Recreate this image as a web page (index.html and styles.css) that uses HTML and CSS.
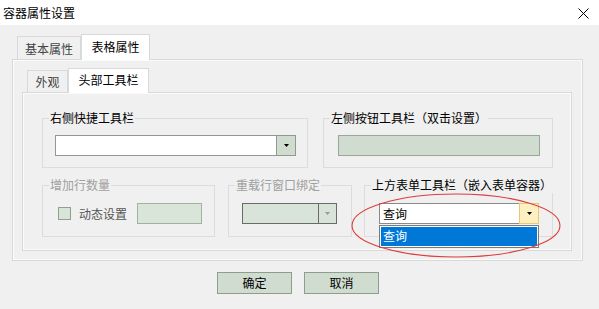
FILE: index.html
```html
<!DOCTYPE html>
<html lang="zh-CN">
<head>
<meta charset="utf-8">
<title>容器属性设置</title>
<link rel="stylesheet" href="styles.css">
</head>
<body>
<div class="window">
  <div class="titlebar">
    <span class="title">容器属性设置</span>
    <svg class="close" width="11" height="11" viewBox="0 0 11 11"><path d="M0.5 0.5 L10.5 10.5 M10.5 0.5 L0.5 10.5" stroke="#000" stroke-width="1"/></svg>
  </div>
  <div class="content">
    <div class="tabs outer-tabs">
      <div class="tab tab-basic">基本属性</div>
      <div class="tab tab-grid active">表格属性</div>
    </div>
    <div class="panel outer-panel">
      <div class="tabs inner-tabs">
        <div class="tab tab-look">外观</div>
        <div class="tab tab-head active">头部工具栏</div>
      </div>
      <div class="panel inner-panel">
        <div class="row row1">
          <fieldset class="group g1">
            <legend>右侧快捷工具栏</legend>
            <div class="combo combo-g1">
              <div class="combo-text"></div>
              <div class="combo-btn"><svg width="5" height="3" viewBox="0 0 5 3"><polygon points="0,0 5,0 2.5,3" fill="#000"/></svg></div>
            </div>
          </fieldset>
          <fieldset class="group g2">
            <legend>左侧按钮工具栏（双击设置）</legend>
            <div class="toolbar-box"></div>
          </fieldset>
        </div>
        <div class="row row2">
          <fieldset class="group g3 disabled">
            <legend>增加行数量</legend>
            <div class="check-row">
              <span class="checkbox"></span>
              <span class="check-label">动态设置</span>
              <span class="num-box"></span>
            </div>
          </fieldset>
          <fieldset class="group g4 disabled">
            <legend>重载行窗口绑定</legend>
            <div class="combo combo-disabled">
              <div class="combo-text"></div>
              <div class="combo-btn"><svg width="5" height="3" viewBox="0 0 5 3"><polygon points="0,0 5,0 2.5,3" fill="#9a9a9a"/></svg></div>
            </div>
          </fieldset>
          <fieldset class="group g5">
            <legend>上方表单工具栏（嵌入表单容器）</legend>
            <div class="combo combo-open">
              <div class="combo-text">查询</div>
              <div class="combo-btn"><svg width="5" height="3" viewBox="0 0 5 3"><polygon points="0,0 5,0 2.5,3" fill="#000"/></svg></div>
              <div class="dropdown"><div class="option selected">查询</div></div>
            </div>
          </fieldset>
        </div>
      </div>
    </div>
    <div class="buttons">
      <button class="btn">确定</button>
      <button class="btn">取消</button>
    </div>
  </div>
  <svg class="highlight" width="599" height="309" viewBox="0 0 599 309"><ellipse cx="456" cy="225.5" rx="104" ry="31.5" fill="none" stroke="#dc3c3c" stroke-width="1.1"/></svg>
</div>
</body>
</html>
```

FILE: styles.css
```css
* { box-sizing: border-box; }
html, body { margin: 0; padding: 0; }
body {
  width: 599px;
  height: 309px;
  overflow: hidden;
  background: #f0f0f0;
  font-family: "Noto Sans CJK SC", "Noto Sans", sans-serif;
  font-size: 12px;
  color: #000;
}
.window {
  position: relative;
  width: 599px;
  height: 309px;
  background: #f0f0f0;
}
.titlebar {
  height: 25px;
  background: #fff;
  display: flex;
  align-items: center;
  justify-content: space-between;
  padding: 0 10px 0 3px;
}
.title { font-size: 12px; line-height: 16px; color: #000; }
.close { display: block; margin-top: 1px; }

.content { padding-top: 9px; }

.tabs {
  display: flex;
  align-items: flex-end;
}
.tab {
  border: 1px solid #d9d9d9;
  border-bottom: none;
  background: #f0f0f0;
  color: #444;
  display: flex;
  align-items: center;
  justify-content: center;
  line-height: 16px;
}
.tab.active {
  background: #fff;
  color: #000;
  margin-bottom: -1px;
  position: relative;
  z-index: 1;
}
.outer-tabs { margin-left: 17px; }
.tab-basic { width: 64px; height: 23px; padding-top: 1px; }
.tab-grid { width: 69px; height: 26px; padding-bottom: 1px; }
.inner-tabs { margin-left: 5px; }
.tab-look { width: 41px; height: 22px; padding-top: 1px; }
.tab-head { width: 81px; height: 25px; padding-bottom: 2px; }

.panel {
  border: 1px solid #d9d9d9;
  box-shadow: inset 0 0 0 1px #fbfbfb;
  background: #f0f0f0;
}
.outer-panel {
  margin-left: 12px;
  width: 571px;
  height: 202px;
  padding: 8px 10px 9px 9px;
}
.inner-panel {
  width: 550px;
  height: 159px;
  padding: 17px 0 0 19px;
}

.row { display: flex; align-items: flex-start; }
.row2 { margin-top: 9px; }

.group {
  margin: 0;
  border: 1px solid #dcdcdc;
  min-width: 0;
  padding-left: 0;
  padding-right: 0;
}
.group legend {
  margin-left: 6px;
  padding: 0 1px;
  line-height: 16px;
  font-size: 12px;
  color: #000;
  white-space: nowrap;
}
.group.disabled legend { color: #a0a0a0; }

.g1 { width: 266px; padding-top: 9px; padding-bottom: 11px; }
.g2 { width: 230px; margin-left: 15px; padding-top: 9px; padding-bottom: 11px; }
.g3 { width: 173px; padding-top: 10px; padding-bottom: 12px; }
.g4 { width: 124px; margin-left: 13px; padding-top: 10px; padding-bottom: 12px; }
.g5 { width: 189px; margin-left: 12px; padding-top: 10px; padding-bottom: 12px; }

.combo {
  position: relative;
  display: flex;
  height: 21px;
  border: 1px solid #8e9b8e;
  background: #fff;
}
.combo-text {
  flex: 1;
  padding-left: 3px;
  line-height: 19px;
  font-size: 12px;
  color: #000;
}
.combo-btn {
  width: 19px;
  border-left: 1px solid #8e9b8e;
  background: #cfdccf;
  display: flex;
  align-items: center;
  justify-content: center;
}
.combo-btn svg { display: block; }
.combo-g1 { width: 241px; margin-left: 12px; }

.combo-disabled {
  width: 95px;
  margin-left: 13px;
  border-color: #6a6a6a;
  background: #d9e4d9;
}
.combo-disabled .combo-btn {
  width: 18px;
  border-left-color: #6a6a6a;
  background: #d9e4d9;
}

.combo-open {
  width: 160px;
  margin-left: 14px;
  border-color: #8a8a8a;
}
.combo-open .combo-btn {
  width: 20px;
  border: 1px solid #e8c870;
  margin: -1px -1px -1px 0;
  height: 21px;
  background: #fdf0c0;
}
.dropdown {
  position: absolute;
  left: -1px;
  top: 21px;
  width: 160px;
  height: 23px;
  border: 1px solid #7a7a7a;
  background: #fff;
  padding: 1px;
  z-index: 2;
}
.option {
  height: 19px;
  line-height: 18px;
  padding-left: 2px;
  font-size: 12px;
}
.option.selected { background: #0078d7; color: #fff; }

.toolbar-box {
  width: 202px;
  height: 21px;
  margin-left: 14px;
  background: #cfdccf;
  border: 1px solid #98a898;
}

.check-row {
  display: flex;
  align-items: center;
  height: 21px;
  margin-left: 15px;
}
.checkbox {
  width: 13px;
  height: 13px;
  border: 1px solid #8fa08f;
  background: #d9e4d9;
}
.check-label {
  margin-left: 8px;
  color: #555;
  line-height: 16px;
}
.num-box {
  margin-left: 10px;
  width: 65px;
  height: 21px;
  border: 1px solid #a3b0a3;
  background: #dae5da;
}

.buttons {
  display: flex;
  justify-content: center;
  gap: 12px;
  margin-top: 11px;
  padding-right: 3px;
}
.btn {
  width: 75px;
  height: 22px;
  margin: 0;
  padding: 0;
  border: 1px solid #8ba08b;
  background: #cfdccf;
  font-family: "Noto Sans CJK SC", sans-serif;
  font-size: 12px;
  line-height: 18px;
  color: #000;
}

.highlight {
  position: absolute;
  left: 0;
  top: 0;
  pointer-events: none;
  z-index: 5;
}
```
